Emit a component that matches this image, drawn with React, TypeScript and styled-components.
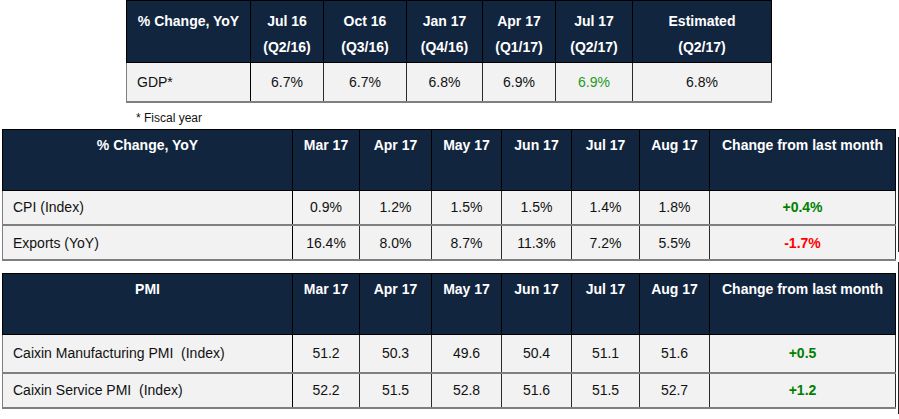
import styled, { createGlobalStyle } from "styled-components";

const GlobalStyle = createGlobalStyle`
  body {
    margin: 0;
    background: #ffffff;
    font-family: "Liberation Sans", Arial, sans-serif;
  }
`;

const Page = styled.div`
  display: flex;
  flex-direction: column;
  padding-left: 2px;
  width: 897px;
`;

const TopWrap = styled.div`
  margin-left: 124px;
`;

const Table = styled.table`
  border-collapse: collapse;
  table-layout: fixed;
  font-size: 14px;
  color: #111;
`;

const HeadCell = styled.th<{ $top?: number }>`
  background: #12253f;
  color: #ffffff;
  font-weight: bold;
  text-align: center;
  vertical-align: top;
  line-height: 26px;
  padding: ${(p) => p.$top ?? 2}px 2px 0;
  border: 1px solid #000;
  white-space: nowrap;
`;

const Row = styled.tr<{ $h: number }>`
  height: ${(p) => p.$h}px;
  background: #f2f2f2;
`;

const HeadRow = styled.tr<{ $h: number }>`
  height: ${(p) => p.$h}px;
`;

const Cell = styled.td<{ $color?: string; $bold?: boolean }>`
  text-align: center;
  vertical-align: middle;
  padding: 0 4px;
  color: ${(p) => p.$color ?? "#111"};
  font-weight: ${(p) => (p.$bold ? "bold" : "normal")};
  border-left: 1px solid #2a2a2a;
  border-right: 1px solid #2a2a2a;
  border-bottom: 2px solid #7f7f7f;
  white-space: nowrap;
`;

const LabelCell = styled(Cell)`
  text-align: left;
  padding-left: 10px;
  border-left: 1px solid #7f7f7f;
  border-right: 1px solid #000;
`;

const FootNote = styled.div`
  margin-left: 134px;
  padding-top: 7px;
  height: 19px;
  font-size: 12px;
  line-height: 16px;
  color: #111;
`;

const TableLine = styled.div<{ $gap: number }>`
  display: flex;
  align-items: flex-start;
  gap: 2px;
  margin-top: ${(p) => p.$gap}px;
`;

const EdgeStub = styled.div<{ $offset: number }>`
  display: flex;
  flex-direction: column;
  margin-top: ${(p) => p.$offset}px;
  width: 3px;
  border-left: 1px solid #222;
`;

const StubSeg = styled.div<{ $h: number }>`
  height: ${(p) => p.$h}px;
  border-bottom: 1px solid #666;
`;

const topCols = [124, 73, 83, 76, 73, 77, 139];
const wideCols = [290, 67, 72, 70, 70, 68, 70, 186];
const months = ["Mar 17", "Apr 17", "May 17", "Jun 17", "Jul 17", "Aug 17"];

const green = "#008000";
const red = "#ff0000";

interface IDataRow {
  label: string;
  values: string[];
  change: string;
  up: boolean;
  h: number;
}

const cpiRows: IDataRow[] = [
  { label: "CPI (Index)", values: ["0.9%", "1.2%", "1.5%", "1.5%", "1.4%", "1.8%"], change: "+0.4%", up: true, h: 35 },
  { label: "Exports (YoY)", values: ["16.4%", "8.0%", "8.7%", "11.3%", "7.2%", "5.5%"], change: "-1.7%", up: false, h: 35 },
];

const pmiRows: IDataRow[] = [
  { label: "Caixin Manufacturing PMI  (Index)", values: ["51.2", "50.3", "49.6", "50.4", "51.1", "51.6"], change: "+0.5", up: true, h: 38 },
  { label: "Caixin Service PMI  (Index)", values: ["52.2", "51.5", "52.8", "51.6", "51.5", "52.7"], change: "+1.2", up: true, h: 35 },
];

function MonthTable({ title, rows }: { title: string; rows: IDataRow[] }) {
  const total = wideCols.reduce((a, b) => a + b, 0);
  return (
    <Table style={{ width: total }}>
      <colgroup>
        {wideCols.map((w, i) => (
          <col key={i} style={{ width: w }} />
        ))}
      </colgroup>
      <thead>
        <HeadRow $h={61}>
          <HeadCell>{title}</HeadCell>
          {months.map((m) => (
            <HeadCell key={m}>{m}</HeadCell>
          ))}
          <HeadCell>Change from last month</HeadCell>
        </HeadRow>
      </thead>
      <tbody>
        {rows.map((r) => (
          <Row key={r.label} $h={r.h}>
            <LabelCell style={{ whiteSpace: "pre" }}>{r.label}</LabelCell>
            {r.values.map((v, i) => (
              <Cell key={i}>{v}</Cell>
            ))}
            <Cell $bold $color={r.up ? green : red}>
              {r.change}
            </Cell>
          </Row>
        ))}
      </tbody>
    </Table>
  );
}

function App() {
  const gdpHeads = [
    ["Jul 16", "(Q2/16)"],
    ["Oct 16", "(Q3/16)"],
    ["Jan 17", "(Q4/16)"],
    ["Apr 17", "(Q1/17)"],
    ["Jul 17", "(Q2/17)"],
    ["Estimated", "(Q2/17)"],
  ];
  const gdp = ["6.7%", "6.7%", "6.8%", "6.9%", "6.9%", "6.8%"];
  return (
    <>
      <GlobalStyle />
      <Page>
        <TopWrap>
          <Table style={{ width: topCols.reduce((a, b) => a + b, 0) }}>
            <colgroup>
              {topCols.map((w, i) => (
                <col key={i} style={{ width: w }} />
              ))}
            </colgroup>
            <thead>
              <HeadRow $h={62}>
                <HeadCell $top={7}>% Change, YoY</HeadCell>
                {gdpHeads.map(([a, b]) => (
                  <HeadCell key={a} $top={7}>
                    {a}
                    <br />
                    {b}
                  </HeadCell>
                ))}
              </HeadRow>
            </thead>
            <tbody>
              <Row $h={39}>
                <LabelCell>GDP*</LabelCell>
                {gdp.map((v, i) => (
                  <Cell key={i} $color={i === 4 ? "#1f9a1f" : undefined}>
                    {v}
                  </Cell>
                ))}
              </Row>
            </tbody>
          </Table>
        </TopWrap>
        <FootNote>* Fiscal year</FootNote>
        <TableLine $gap={0}>
          <MonthTable title="% Change, YoY" rows={cpiRows} />
          <EdgeStub $offset={8}>
            <StubSeg $h={41} />
            <StubSeg $h={34} />
            <StubSeg $h={37} />
          </EdgeStub>
        </TableLine>
        <TableLine $gap={12}>
          <MonthTable title="PMI" rows={pmiRows} />
          <EdgeStub $offset={-11}>
            <StubSeg $h={32} />
            <StubSeg $h={41} />
            <StubSeg $h={37} />
            <StubSeg $h={38} />
          </EdgeStub>
        </TableLine>
      </Page>
    </>
  );
}

export default App;
